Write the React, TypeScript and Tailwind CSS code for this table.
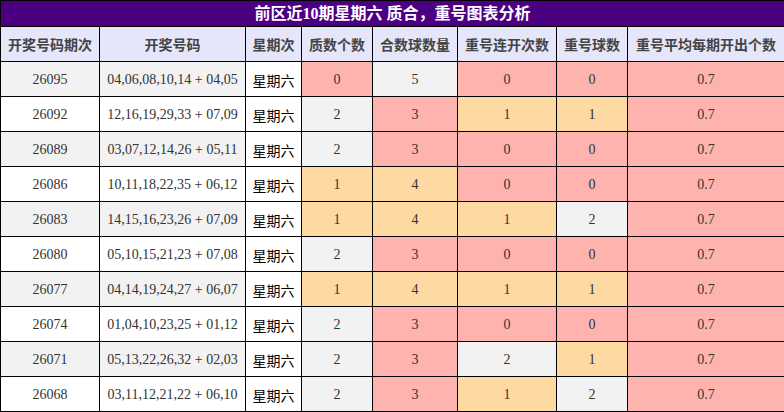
const PINK = "bg-[#ffb3ae]";
const ORANGE = "bg-[#ffd9a2]";
const GRAY = "bg-[#f2f2f2]";

type Tone = "p" | "o" | "g";

const rows: { issue: string; nums: string; v: [string, Tone][] }[] = [
  { issue: "26095", nums: "04,06,08,10,14 + 04,05", v: [["0", "p"], ["5", "g"], ["0", "p"], ["0", "p"], ["0.7", "p"]] },
  { issue: "26092", nums: "12,16,19,29,33 + 07,09", v: [["2", "g"], ["3", "p"], ["1", "o"], ["1", "o"], ["0.7", "p"]] },
  { issue: "26089", nums: "03,07,12,14,26 + 05,11", v: [["2", "g"], ["3", "p"], ["0", "p"], ["0", "p"], ["0.7", "p"]] },
  { issue: "26086", nums: "10,11,18,22,35 + 06,12", v: [["1", "o"], ["4", "o"], ["0", "p"], ["0", "p"], ["0.7", "p"]] },
  { issue: "26083", nums: "14,15,16,23,26 + 07,09", v: [["1", "o"], ["4", "o"], ["1", "o"], ["2", "g"], ["0.7", "p"]] },
  { issue: "26080", nums: "05,10,15,21,23 + 07,08", v: [["2", "g"], ["3", "p"], ["0", "p"], ["0", "p"], ["0.7", "p"]] },
  { issue: "26077", nums: "04,14,19,24,27 + 06,07", v: [["1", "o"], ["4", "o"], ["1", "o"], ["1", "o"], ["0.7", "p"]] },
  { issue: "26074", nums: "01,04,10,23,25 + 01,12", v: [["2", "g"], ["3", "p"], ["0", "p"], ["0", "p"], ["0.7", "p"]] },
  { issue: "26071", nums: "05,13,22,26,32 + 02,03", v: [["2", "g"], ["3", "p"], ["2", "g"], ["1", "o"], ["0.7", "p"]] },
  { issue: "26068", nums: "03,11,12,21,22 + 06,10", v: [["2", "g"], ["3", "p"], ["1", "o"], ["2", "g"], ["0.7", "p"]] },
];

const headers = ["开奖号码期次", "开奖号码", "星期次", "质数个数", "合数球数量", "重号连开次数", "重号球数", "重号平均每期开出个数"];
const widths = [99, 146, 56, 71, 85, 99, 71, 157];

const toneClass = (t: Tone) => (t === "p" ? PINK : t === "o" ? ORANGE : GRAY);

export default function App() {
  return (
    <div className="w-[784px] h-[412px] bg-white">
      <table
        className="w-[784px] table-fixed border-collapse border border-black text-center"
        style={{ fontFamily: '"Liberation Serif", "Noto Sans CJK SC", serif' }}
      >
        <colgroup>
          {widths.map((w, i) => (
            <col key={i} style={{ width: w }} />
          ))}
        </colgroup>
        <thead>
          <tr className="h-[26px]">
            <th colSpan={8} className="border border-black bg-[#4b0082] text-white text-[16px] font-bold leading-none p-0">
              前区近10期星期六 质合，重号图表分析
            </th>
          </tr>
          <tr className="h-[35px]">
            {headers.map((h) => (
              <th
                key={h}
                className="border border-black bg-[#e6e6fa] text-[#444] text-[14px] font-bold p-0 whitespace-nowrap"
                style={{ fontFamily: '"Noto Sans CJK SC", sans-serif' }}
              >
                {h}
              </th>
            ))}
          </tr>
        </thead>
        <tbody className="text-[14px] text-[#333]">
          {rows.map((r, i) => {
            const base = i % 2 === 0 ? GRAY : "bg-white";
            return (
              <tr key={r.issue} className="h-[35px]">
                <td className={`border border-black p-0 ${base}`}>{r.issue}</td>
                <td className={`border border-black p-0 whitespace-nowrap ${base}`}>{r.nums}</td>
                <td
                  className="border border-black p-0 bg-white text-black pt-[3px]"
                  style={{ fontFamily: '"Noto Sans CJK SC", sans-serif' }}
                >
                  星期六
                </td>
                {r.v.map(([val, t], j) => (
                  <td key={j} className={`border border-black p-0 ${toneClass(t)}`}>
                    {val}
                  </td>
                ))}
              </tr>
            );
          })}
        </tbody>
      </table>
    </div>
  );
}
